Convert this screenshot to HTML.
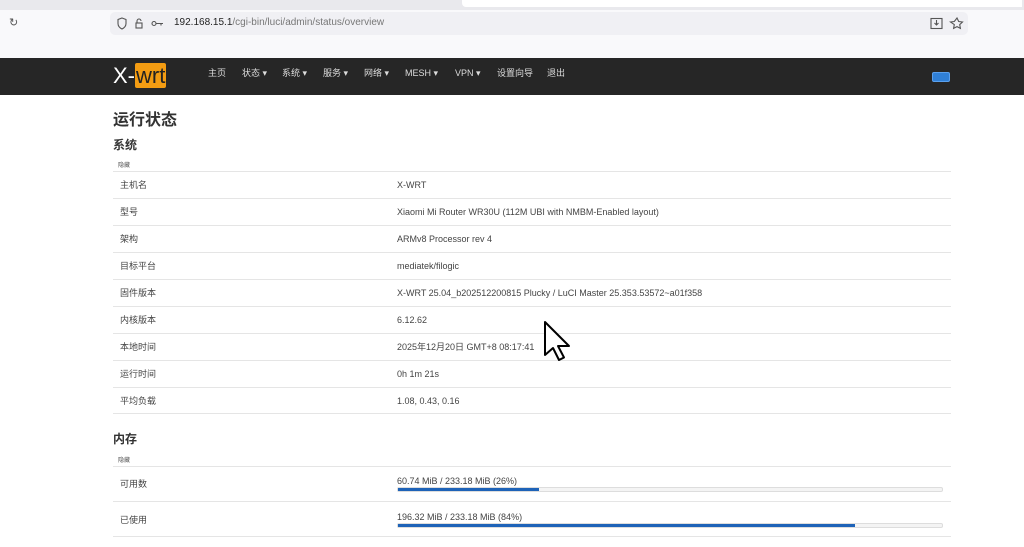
<!DOCTYPE html>
<html><head><meta charset="utf-8"><style>
*{margin:0;padding:0;box-sizing:border-box}
body{width:1024px;height:547px;overflow:hidden;background:#fff;font-family:"Liberation Sans","Noto Sans CJK SC",sans-serif;position:relative;color:#333}
.abs{position:absolute}
.row{position:absolute;left:113px;width:838px;height:27px;border-top:1px solid #e5e5e5}
.row .a,.row .b{position:absolute;top:7px;font-size:9px;line-height:12px;height:12px;color:#444;display:flex;align-items:center}
.row .a{left:7px}
.row .b{left:284px}
.bar{position:absolute;left:284px;width:546px;height:5px;border:1px solid #ddd;border-radius:2px;background:#f4f4f4}
.bar i{display:block;height:100%;background:#1e63b8}
.nav span{position:absolute;top:67px;height:12px;line-height:12px;font-size:9px;color:#ddd;display:flex;align-items:center}
</style></head><body>
<div class="abs" style="left:0;top:0;width:1024px;height:10px;background:#e9e9ed"></div>
<div class="abs" style="left:462px;top:0;width:560px;height:7px;background:#fff;border-radius:0 0 0 4px"></div>
<div class="abs" style="left:0;top:10px;width:1024px;height:48px;background:#f9f9fb"></div>
<div class="abs" style="left:9px;top:16px;font-size:11px;color:#555">&#8635;</div>
<div class="abs" style="left:110px;top:12px;width:858px;height:23px;background:#f0f0f4;border-radius:5px"></div>
<svg class="abs" style="left:116px;top:17px" width="50" height="13" viewBox="0 0 50 13" fill="none" stroke="#555" stroke-width="1.1"><path d="M6 1l4 1.5v4c0 3-2 4.5-4 5.5c-2-1-4-2.5-4-5.5v-4z"/><rect x="20" y="6" width="6" height="5"/><path d="M21 6V4a2 2 0 0 1 4 0"/><circle cx="38" cy="6.5" r="2"/><path d="M40 6.5h7M45 6.5v2"/></svg>
<div class="abs" style="left:174px;top:17px;font-size:10px;color:#222">192.168.15.1<span style="color:#777">/cgi-bin/luci/admin/status/overview</span></div>
<svg class="abs" style="left:930px;top:17px" width="34" height="13" viewBox="0 0 34 13" fill="none" stroke="#555" stroke-width="1.1"><rect x="1" y="1.5" width="11" height="10"/><path d="M6.5 3v5M4.5 6l2 2 2-2"/><path d="M27 1l1.7 3.5 3.8.5-2.8 2.6.7 3.8-3.4-1.8-3.4 1.8.7-3.8L20.5 5l3.8-.5z"/></svg>
<div class="abs" style="left:0;top:58px;width:1024px;height:37px;background:#262626"></div>
<div class="abs" style="left:113px;top:63px;font-size:22px;color:#fff;line-height:25px">X-<span style="background:#f39c12;color:#222;padding:0 1px;border-radius:2px">wrt</span></div>
<div class="nav">
<span style="left:208px">主页</span><span style="left:242px">状态 ▾</span><span style="left:282px">系统 ▾</span><span style="left:323px">服务 ▾</span><span style="left:364px">网络 ▾</span><span style="left:405px">MESH ▾</span><span style="left:455px">VPN ▾</span><span style="left:497px">设置向导</span><span style="left:547px">退出</span>
</div>
<div class="abs" style="left:932px;top:72px;width:18px;height:10px;background:#2f7fd6;border-radius:2px;border:1px solid #5aa0ee"></div>
<div class="abs" style="left:113px;top:109px;font-size:16px;font-weight:bold;color:#333;line-height:20px;padding-top:2px">运行状态</div>
<div class="abs" style="left:113px;top:137px;font-size:12px;font-weight:bold;color:#333;line-height:16px">系统</div>
<div class="abs" style="left:118px;top:160px;font-size:6px;color:#555">隐藏</div>
<div class="row" style="top:171px"><span class="a">主机名</span><span class="b">X-WRT</span></div>
<div class="row" style="top:198px"><span class="a">型号</span><span class="b">Xiaomi Mi Router WR30U (112M UBI with NMBM-Enabled layout)</span></div>
<div class="row" style="top:225px"><span class="a">架构</span><span class="b">ARMv8 Processor rev 4</span></div>
<div class="row" style="top:252px"><span class="a">目标平台</span><span class="b">mediatek/filogic</span></div>
<div class="row" style="top:279px"><span class="a">固件版本</span><span class="b">X-WRT 25.04_b202512200815 Plucky / LuCI Master 25.353.53572~a01f358</span></div>
<div class="row" style="top:306px"><span class="a">内核版本</span><span class="b">6.12.62</span></div>
<div class="row" style="top:333px"><span class="a">本地时间</span><span class="b">2025年12月20日 GMT+8 08:17:41</span></div>
<div class="row" style="top:360px"><span class="a">运行时间</span><span class="b">0h 1m 21s</span></div>
<div class="row" style="top:387px;border-bottom:1px solid #e5e5e5"><span class="a">平均负载</span><span class="b">1.08, 0.43, 0.16</span></div>
<div class="abs" style="left:113px;top:431px;font-size:12px;font-weight:bold;color:#333;line-height:16px">内存</div>
<div class="abs" style="left:118px;top:455px;font-size:6px;color:#555">隐藏</div>
<div class="row" style="top:466px;height:35px"><span class="a" style="top:11px">可用数</span><span class="b" style="top:8px">60.74 MiB / 233.18 MiB (26%)</span><div class="bar" style="top:20px"><i style="width:26%"></i></div></div>
<div class="row" style="top:501px;height:36px;border-bottom:1px solid #e5e5e5"><span class="a" style="top:12px">已使用</span><span class="b" style="top:9px">196.32 MiB / 233.18 MiB (84%)</span><div class="bar" style="top:21px"><i style="width:84%"></i></div></div>
<svg class="abs" style="left:543px;top:320px" width="30" height="42" viewBox="0 0 30 42"><path d="M2 2v33l8-7 6 12 5-2.5-6-11.5h11z" fill="#fff" stroke="#000" stroke-width="2" stroke-linejoin="round"/></svg>
</body></html>
